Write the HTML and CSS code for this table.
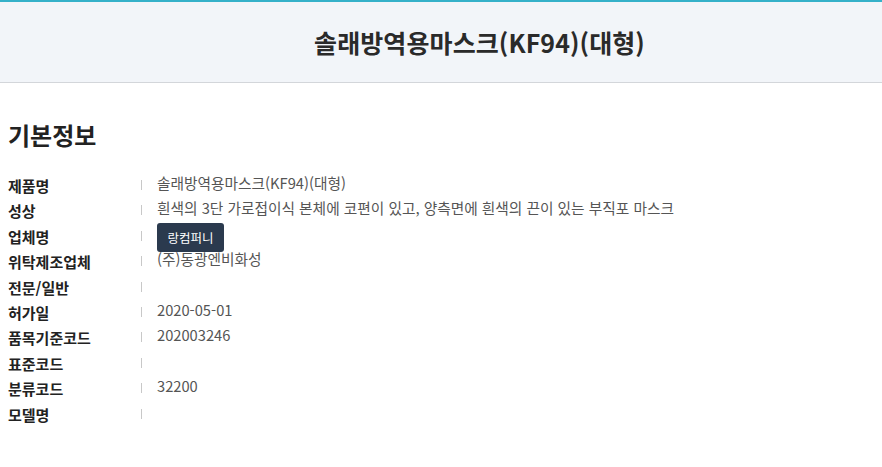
FILE: index.html
```html
<!DOCTYPE html>
<html lang="ko">
  <head>
    <meta charset="UTF-8" />
    <meta name="viewport" content="width=device-width, initial-scale=1.0" />
    <title>솔래방역용마스크(KF94)(대형)</title>
    <link rel="stylesheet" href="styles.css">
  </head>
  <body>
    <header class="page-head">
      <h1>솔래방역용마스크(KF94)(대형)</h1>
    </header>
    <main id="container">
      <h2>기본정보</h2>
      <dl class="info-list">
        <div class="info-row">
          <dt>제품명</dt>
          <dd>솔래방역용마스크(KF94)(대형)</dd>
        </div>
        <div class="info-row">
          <dt>성상</dt>
          <dd>흰색의 3단 가로접이식 본체에 코편이 있고, 양측면에 흰색의 끈이 있는 부직포 마스크</dd>
        </div>
        <div class="info-row">
          <dt>업체명</dt>
          <dd><button type="button" class="company-btn">랑컴퍼니</button></dd>
        </div>
        <div class="info-row">
          <dt>위탁제조업체</dt>
          <dd>(주)동광엔비화성</dd>
        </div>
        <div class="info-row">
          <dt>전문/일반</dt>
          <dd></dd>
        </div>
        <div class="info-row">
          <dt>허가일</dt>
          <dd>2020-05-01</dd>
        </div>
        <div class="info-row">
          <dt>품목기준코드</dt>
          <dd>202003246</dd>
        </div>
        <div class="info-row">
          <dt>표준코드</dt>
          <dd></dd>
        </div>
        <div class="info-row">
          <dt>분류코드</dt>
          <dd>32200</dd>
        </div>
        <div class="info-row">
          <dt>모델명</dt>
          <dd></dd>
        </div>
      </dl>
    </main>
  </body>
</html>
```

FILE: styles.css
```css
* {
  box-sizing: border-box;
  margin: 0;
  padding: 0;
}
body {
  font-family: "Noto Sans CJK KR", "Noto Sans", sans-serif;
  background-color: #fff;
  color: #222;
}
.page-head {
  height: 83px;
  background-color: #f2f5f9;
  border-top: 2px solid #35b1c9;
  border-bottom: 1px solid #d3d6da;
  display: flex;
  align-items: center;
  justify-content: center;
  padding-left: 77px;
}
.page-head h1 {
  font-size: 25px;
  font-weight: 700;
  color: #2a2a2a;
  letter-spacing: 0.1px;
}
#container {
  padding: 0 8px;
}
h2 {
  font-size: 24px;
  font-weight: 700;
  color: #222;
  margin-top: 34px;
  margin-bottom: 21px;
}
.info-row {
  display: flex;
  align-items: flex-start;
  height: 25.4px;
  line-height: 25px;
}
.info-row dt {
  width: 132px;
  flex-shrink: 0;
  font-size: 15px;
  font-weight: 700;
  color: #222;
}
.info-row dd {
  position: relative;
  padding-left: 17px;
  font-size: 14.7px;
  color: #555;
  margin-top: -3px;
}
.info-row dd::before {
  content: "";
  position: absolute;
  left: 1px;
  top: 10px;
  width: 1px;
  height: 10px;
  background-color: #c8c8c8;
}
.company-btn {
  font-family: inherit;
  font-size: 12.5px;
  line-height: 29px;
  color: #fff;
  background-color: #2b3a4e;
  border: none;
  border-radius: 3px;
  padding: 0 10.5px;
  height: 29px;
  margin-top: 2px;
  cursor: pointer;
}
```
